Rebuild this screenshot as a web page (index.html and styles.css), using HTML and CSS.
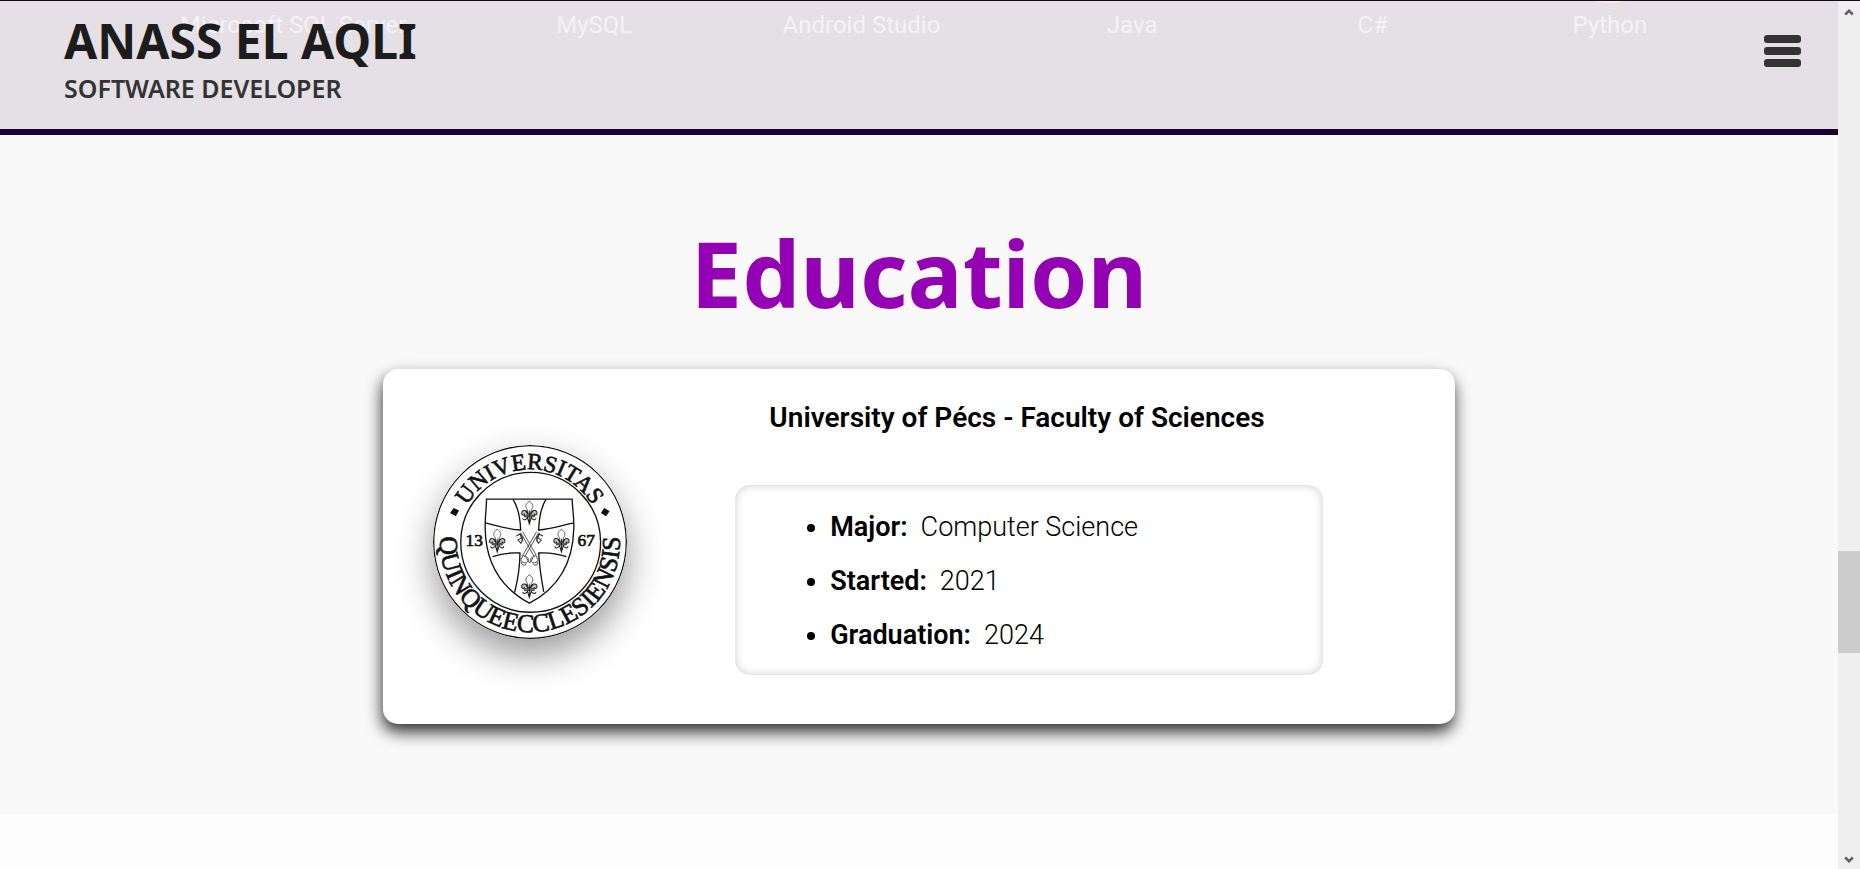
FILE: index.html
```html
<!DOCTYPE html>
<html lang="en">
<head>
<meta charset="utf-8">
<title>Anass El Aqli - Software Developer</title>
<link rel="stylesheet" href="styles.css">
</head>
<body>
<div class="page">
  <header class="header">
    <ul class="skills">
      <li>Microsoft SQL Server</li>
      <li>MySQL</li>
      <li>Android Studio</li>
      <li>Java</li>
      <li>C#</li>
      <li class="skill-python">Python</li>
    </ul>
    <div class="brand">
      <h1 class="brand-name">ANASS EL AQLI</h1>
      <p class="brand-role">SOFTWARE DEVELOPER</p>
    </div>
    <button class="menu" type="button" aria-label="Menu"><span></span><span></span><span></span></button>
  </header>

  <main class="education">
    <h2 class="section-title">Education</h2>
    <article class="card">
      <svg class="seal" viewBox="39 44 580 580" role="img" aria-label="University of Pécs seal">
        <defs>
          <path id="arc-top" d="M112 333A216 216 0 0 1 544 333"/>
          <path id="arc-bottom" d="M81 230A269 269 0 1 0 577 230"/>
          <g id="lily" fill="#aaa" stroke="#1d1d1b" stroke-width="2">
            <path d="M0-36C-12-28-13-19-6-11L-4 2H4L6-11C13-19 12-28 0-36Z" fill="#fff"/>
            <path d="M-4 3C-5-9-21-13-23-2C-24 6-15 8-14 1M4 3C5-9 21-13 23-2C24 6 15 8 14 1" fill="#bbb" stroke-width="3"/>
            <path d="M-15 5H15V11H-15Z" fill="#777"/>
            <path d="M-5 11C-7 20-18 23-20 15M5 11C7 20 18 23 20 15M0-8V30M-6 12L0 32L6 12M-10-6L-4 4M10-6L4 4" fill="none" stroke-width="3"/>
          </g>
        </defs>
        <circle cx="329" cy="334" r="288" fill="#fff" stroke="#111" stroke-width="4"/>
        <circle cx="331" cy="335" r="209" fill="none" stroke="#111" stroke-width="4"/>
        <text class="seal-top"><textPath href="#arc-top" startOffset="50%" text-anchor="middle">UNIVERSITAS</textPath></text>
        <text class="seal-bottom"><textPath href="#arc-bottom" startOffset="50%" text-anchor="middle">QUINQUEECCLESIENSIS</textPath></text>
        <path d="M101 232L117 240L107 257L90 247ZM551 232L567 242L556 257L541 247Z" fill="#111"/>
        <text class="seal-year" x="162" y="346">13</text>
        <text class="seal-year" x="497" y="346">67</text>
        <g fill="none" stroke="#111" stroke-width="4">
          <path d="M199 206H455C456 238 461 258 460 292C458 390 419 469 327 517C235 467 196 390 195 292C194 258 199 238 199 206Z"/>
          <path d="M278 206C294 232 300 264 301 298C266 297 231 285 195 277M377 206C361 232 356 264 355 298C391 297 425 284 460 277M217 378C244 369 269 365 299 367C299 408 293 445 283 485M438 378C411 369 386 365 355 367C357 408 363 445 370 483"/>
        </g>
        <use href="#lily" x="327" y="248"/>
        <use href="#lily" x="231" y="332"/>
        <use href="#lily" x="423" y="332"/>
        <use href="#lily" x="327" y="468"/>
        <g fill="none" stroke="#333" stroke-width="2.5">
          <path d="M301 306L342 378M307 303L348 374M355 306L313 378M349 303L307 374"/>
          <path d="M288 316L300 310L308 322L302 338L293 328L304 321M298 308L308 332M368 316L356 310L348 322L354 338L363 328L352 321M358 308L348 332" stroke-width="3"/>
          <path d="M308 374C316 379 326 379 324 389C320 400 303 397 302 387ZM346 374C338 379 330 379 331 389C335 400 352 397 353 387ZM304 394A7 7 0 1 0 318 398M352 394A7 7 0 1 1 338 398M318 381L328 397L338 381"/>
        </g>
      </svg>
      <div class="details">
        <h3 class="school">University of Pécs - Faculty of Sciences</h3>
        <ul class="facts">
          <li><strong>Major:</strong><span>Computer Science</span></li>
          <li><strong>Started:</strong><span>2021</span></li>
          <li><strong>Graduation:</strong><span>2024</span></li>
        </ul>
      </div>
    </article>
  </main>
</div>
<div class="scrollbar" aria-hidden="true">
  <svg class="arrow" viewBox="0 0 8 6"><path d="M1 5L4 2L7 5"/></svg>
  <div class="track"><div class="thumb"></div></div>
  <svg class="arrow" viewBox="0 0 8 6"><path d="M1 1L4 4L7 1"/></svg>
</div>
</body>
</html>
```
FILE: styles.css
```css
* { box-sizing: border-box; }

body {
  margin: 0;
  min-height: 100vh;
  display: flex;
  border-top: 1px solid #140a1c;
  background: #fdfdfd;
  color: #000;
  font-family: Roboto, "Liberation Sans", sans-serif;
}

h1, h2, h3, p, ul { margin: 0; padding: 0; }

.page { flex: 1; min-width: 0; }

.header {
  position: relative;
  display: flex;
  justify-content: space-between;
  align-items: flex-start;
  height: 134px;
  padding: 8px 36px 0 64px;
  background: #e4e0e5;
  border-bottom: 6px solid #1e0030;
  overflow: hidden;
}

.skills {
  position: absolute;
  inset: 0;
  display: grid;
  grid-template-columns: 376fr 226fr 308fr 233fr 248fr 226fr;
  padding: 8px 115px 0 105px;
  list-style: none;
  text-align: center;
  font-size: 24px;
  line-height: 32px;
  color: #f4f2f5;
}

.skill-python { position: relative; }

.skill-python::before {
  content: "";
  position: absolute;
  top: -18px;
  left: 50%;
  width: 40px;
  height: 12px;
  margin-left: -20px;
  border-radius: 50%;
  background: #fbeee0;
}

.brand {
  position: relative;
  font-family: "Noto Sans", "Open Sans", sans-serif;
}

.brand-name {
  font-size: 48px;
  line-height: 64px;
  font-weight: 700;
  color: #1c1c1c;
}

.brand-role {
  font-size: 25px;
  line-height: 30px;
  font-weight: 600;
  color: #333;
}

.menu {
  position: relative;
  display: flex;
  flex-direction: column;
  gap: 4px;
  width: 37px;
  margin: 26px 1px 0 0;
  padding: 0;
  border: 0;
  background: none;
}

.menu span {
  width: 100%;
  height: 8px;
  border-radius: 3px;
  background: #333;
}

.education {
  padding: 70px 0 90px;
  background: #f9f9f9;
}

.section-title {
  font-family: "Noto Sans", "Open Sans", sans-serif;
  font-size: 92px;
  line-height: 136px;
  font-weight: 700;
  text-align: center;
  color: #9400b3;
}

.card {
  display: flex;
  align-items: center;
  width: 58.3%;
  margin: 28px auto 0;
  padding: 28px 48px 49px 50px;
  border-radius: 15px;
  background: #fff;
  box-shadow: -1px 8px 16px rgba(0, 0, 0, 0.8);
}

.seal {
  flex: none;
  width: 194px;
  height: 194px;
  margin-top: 12px;
  border-radius: 50%;
  box-shadow: 0 16px 36px rgba(0, 0, 0, 0.4);
}

.seal text {
  font-family: "Liberation Serif", serif;
  fill: #111;
  stroke: #111;
  stroke-width: 2px;
}

.seal .seal-top { font-size: 70px; }
.seal .seal-bottom { font-size: 77px; }
.seal .seal-year { font-size: 52px; text-anchor: middle; }

.details {
  flex: 1;
  padding: 0 84px 0 108px;
}

.school {
  font-size: 28px;
  line-height: 40px;
  font-weight: 600;
  text-align: center;
  margin: 1px 24px 47px 0;
}

.facts {
  padding: 15px 16px 13px 95px;
  border-radius: 15px;
  box-shadow: inset 0 0 10px rgba(0, 0, 0, 0.2);
  font-size: 27px;
  line-height: 54px;
  font-weight: 300;
}

.facts strong {
  font-weight: 600;
  margin-right: 13px;
}

.scrollbar {
  display: flex;
  flex-direction: column;
  align-items: center;
  width: 22px;
  padding: 7px 0 5px;
  background: #efefef;
}

.arrow {
  width: 10px;
  height: 8px;
  fill: none;
  stroke: #606060;
  stroke-width: 2;
}

.track {
  flex: 1;
  width: 100%;
  display: flex;
  flex-direction: column;
}

.track::before { content: ""; flex: 535; }
.track::after { content: ""; flex: 203; }

.thumb {
  flex: 102;
  background: #cdcdcd;
}
```
